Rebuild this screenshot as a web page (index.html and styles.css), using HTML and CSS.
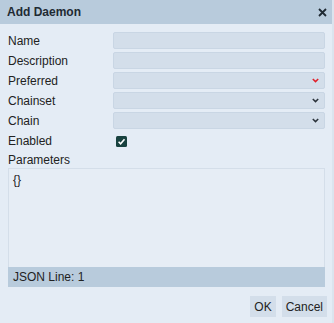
FILE: index.html
```html
<!DOCTYPE html>
<html lang="en">
  <head>
    <meta charset="UTF-8" />
    <title>Add Daemon</title>
    <link rel="stylesheet" href="styles.css">
  </head>
  <body>
    <div class="dialog">
      <div class="titlebar">
        <span class="title">Add Daemon</span>
        <svg class="close" width="9" height="9" viewBox="0 0 9 9"><path d="M1 1l7 7M8 1l-7 7" stroke="#1f2a33" stroke-width="1.8"/></svg>
      </div>
      <div class="content">
        <div class="row">
          <label>Name</label>
          <div class="field"></div>
        </div>
        <div class="row">
          <label>Description</label>
          <div class="field"></div>
        </div>
        <div class="row">
          <label>Preferred</label>
          <div class="field">
            <svg width="7" height="5" viewBox="0 0 7 5"><path d="M0.8 1l2.7 2.6 2.7-2.6" fill="none" stroke="#e0202a" stroke-width="1.5"/></svg>
          </div>
        </div>
        <div class="row">
          <label>Chainset</label>
          <div class="field">
            <svg width="7" height="5" viewBox="0 0 7 5"><path d="M0.8 1l2.7 2.6 2.7-2.6" fill="none" stroke="#2b333b" stroke-width="1.5"/></svg>
          </div>
        </div>
        <div class="row">
          <label>Chain</label>
          <div class="field">
            <svg width="7" height="5" viewBox="0 0 7 5"><path d="M0.8 1l2.7 2.6 2.7-2.6" fill="none" stroke="#2b333b" stroke-width="1.5"/></svg>
          </div>
        </div>
        <div class="row">
          <label>Enabled</label>
          <div class="check">
            <svg width="11" height="11" viewBox="0 0 11 11"><rect width="11" height="11" rx="1.5" fill="#18423f"/><path d="M2.6 5.8l2 2 3.9-4.6" fill="none" stroke="#fff" stroke-width="1.6"/></svg>
          </div>
        </div>
        <div class="params-label">Parameters</div>
        <div class="editor">
          <div class="code">{}</div>
          <div class="status">JSON Line: 1</div>
        </div>
        <div class="buttons">
          <button>OK</button>
          <button>Cancel</button>
        </div>
      </div>
    </div>
  </body>
</html>
```

FILE: styles.css
```css
body {
  margin: 0;
  padding: 0;
  font-family: "Liberation Sans", Arial, sans-serif;
  font-size: 12px;
  color: #222;
  background: #e4ecf5;
}
.dialog {
  width: 334px;
  height: 323px;
  background: #e4ecf5;
  border-right: 2px solid #dbe4ee;
  box-sizing: border-box;
}
.titlebar {
  height: 24px;
  background: #b8cbdc;
  display: flex;
  align-items: center;
  justify-content: space-between;
  padding: 0 5px 0 7px;
}
.title {
  font-weight: bold;
  font-size: 12px;
  color: #1f2a33;
}
.close {
  display: block;
}
.content {
  padding: 8px 7px 0 8px;
}
.row {
  display: flex;
  align-items: flex-start;
  height: 20px;
}
.row label {
  width: 105px;
  line-height: 18px;
  color: #222;
}
.field {
  flex: 1;
  height: 17px;
  box-sizing: border-box;
  background: #d3deea;
  border: 1px solid #c9d6e4;
  border-radius: 2px;
  display: flex;
  align-items: center;
  justify-content: flex-end;
  padding-right: 5px;
}
.field svg {
  display: block;
}
.check {
  padding: 4px 0 0 3px;
}
.check svg {
  display: block;
}
.params-label {
  height: 16px;
  line-height: 16px;
}
.editor {
  border: 1px solid #d4dee9;
  border-bottom: none;
  display: flex;
  flex-direction: column;
  height: 119px;
  box-sizing: border-box;
  background: #e6edf5;
}
.code {
  flex: 1;
  padding: 3px 4px;
  line-height: 16px;
}
.status {
  height: 20px;
  line-height: 20px;
  background: #b8cbdc;
  margin: 0 -1px;
  padding-left: 5px;
}
.buttons {
  display: flex;
  justify-content: flex-end;
  gap: 6px;
  margin-top: 9px;
  margin-right: -2px;
}
button {
  font-family: "Liberation Sans", Arial, sans-serif;
  font-size: 12px;
  color: #222;
  background: #d3deea;
  border: none;
  padding: 0 4px;
  height: 21px;
}
```
